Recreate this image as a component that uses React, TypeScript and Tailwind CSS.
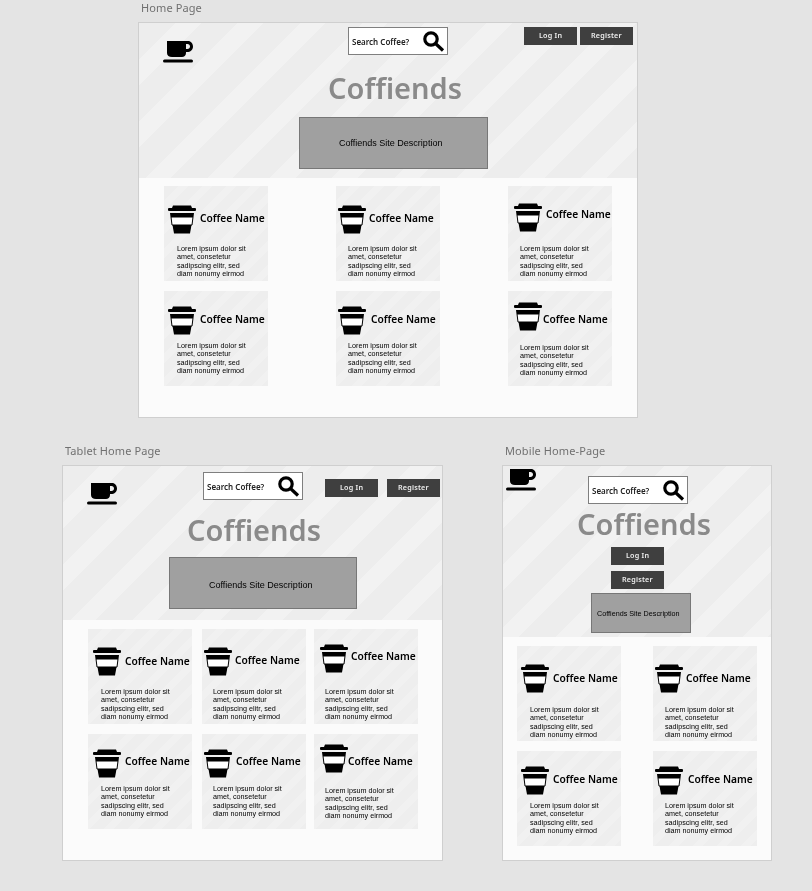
import type { ReactNode } from "react";

type CardData = {
  ix: number; // icon offset in the card
  iy: number;
  nx: number; // name offset after the icon
  ny: number;
  tx: number; // lorem text offset in the card
  ty: number;
};

const heroStripes =
  "bg-[#ededed] bg-[repeating-linear-gradient(135deg,#ededed_0px,#ededed_26px,#f2f2f2_26px,#f2f2f2_44px)]";
const cardStripes =
  "bg-[#eeeeee] bg-[repeating-linear-gradient(135deg,#eeeeee_0px,#eeeeee_10px,#f1f1f1_10px,#f1f1f1_17px)]";

function SearchBox({ className }: { className: string }) {
  return (
    <div className={`flex h-[28px] w-[100px] shrink-0 items-center justify-between border border-[#7f7f7f] bg-white pl-[3px] pr-[2px] ${className}`}>
      <span className="pt-[1px] font-['Noto_Sans',sans-serif] text-[8px] font-semibold text-[#222] will-change-transform">Search Coffee?</span>
      <svg width="22" height="21" viewBox="0 0 22 21" fill="none" stroke="black">
        <circle cx="8" cy="8" r="6.2" strokeWidth="3.2" />
        <line x1="12.5" y1="12.5" x2="20" y2="19.5" strokeWidth="3.2" />
      </svg>
    </div>
  );
}

function Btn({ label, className = "" }: { label: string; className?: string }) {
  return (
    <div className={`flex h-[18px] w-[53px] shrink-0 items-center justify-center bg-[#3f3f3f] pb-[1px] font-['Noto_Sans',sans-serif] text-[7.2px] font-semibold tracking-[0.2px] text-[#eee] ${className}`}>
      <span className="will-change-transform">{label}</span>
    </div>
  );
}

function Logo({ className }: { className: string }) {
  return (
    <svg width="30" height="22" viewBox="0 0 30 22" className={`shrink-0 ${className}`}>
      <path
        fillRule="evenodd"
        d="M4 0H25C28 0 30 2.5 30 5.5C30 9 27.5 11 24 11H23V12C23 14.5 21 16 19 16H9C6 16 4 14.5 4 12ZM23 3V8H24.5C26 8 27 7 27 5.5C27 4 26 3 24.5 3Z"
        fill="black"
      />
      <rect x="0" y="18.5" width="30" height="3" rx="1.5" fill="black" />
    </svg>
  );
}

function CupIcon() {
  return (
    <svg width="28" height="29" viewBox="0 0 28 29" className="shrink-0">
      <path d="M5 0.5H23L24 3H4Z" fill="black" />
      <rect x="0" y="3" width="28" height="3" rx="1" fill="black" />
      <path d="M2 8H26L25.5 12H2.5Z" fill="black" />
      <path d="M3 12H25L24 20H4Z" fill="white" stroke="black" strokeWidth="1" />
      <path d="M4.5 20H23.5L22 28.5H6Z" fill="black" />
    </svg>
  );
}

function Card({ c }: { c: CardData }) {
  return (
    <div className={`h-[95px] w-[104px] ${cardStripes}`}>
      <div className="flex h-[48px] items-start" style={{ paddingLeft: c.ix, paddingTop: c.iy }}>
        <CupIcon />
        <span
          className="whitespace-nowrap font-['Noto_Sans',sans-serif] text-[10.2px] font-semibold leading-[14px] text-black will-change-transform"
          style={{ marginLeft: c.nx, marginTop: c.ny }}
        >
          Coffee Name
        </span>
      </div>
      <p
        className="font-['Liberation_Sans',sans-serif] text-[7.2px] leading-[8.4px] text-black will-change-transform"
        style={{ marginLeft: c.tx, marginTop: c.ty - 47 }}
      >
        Lorem ipsum dolor sit
        <br />
        amet, consetetur
        <br />
        sadipscing elitr, sed
        <br />
        diam nonumy eirmod
      </p>
    </div>
  );
}

function Title({ className }: { className: string }) {
  return (
    <h1 className={`font-['Noto_Sans',sans-serif] text-[29px] font-semibold leading-[40px] text-[#8a8a8a] will-change-transform ${className}`}>
      Coffiends
    </h1>
  );
}

function Description({ className }: { className: string }) {
  return (
    <div className={`flex items-center justify-center border border-[#777] bg-[#a0a0a0] pr-[5px] font-['Liberation_Sans',sans-serif] text-black ${className}`}>
      <span className="will-change-transform">Coffiends Site Description</span>
    </div>
  );
}

const homeCards: CardData[] = [
  { ix: 4, iy: 19, nx: 4, ny: 6, tx: 13, ty: 58 },
  { ix: 2, iy: 19, nx: 3, ny: 6, tx: 12, ty: 58 },
  { ix: 6, iy: 17, nx: 4, ny: 4, tx: 12, ty: 58 },
  { ix: 4, iy: 15, nx: 4, ny: 6, tx: 13, ty: 50 },
  { ix: 2, iy: 15, nx: 5, ny: 6, tx: 12, ty: 50 },
  { ix: 6, iy: 11, nx: 1, ny: 10, tx: 12, ty: 52 },
];

const tabletCards: CardData[] = [
  { ix: 5, iy: 18, nx: 4, ny: 7, tx: 13, ty: 58 },
  { ix: 2, iy: 18, nx: 3, ny: 6, tx: 11, ty: 58 },
  { ix: 6, iy: 15, nx: 3, ny: 5, tx: 11, ty: 58 },
  { ix: 5, iy: 15, nx: 4, ny: 5, tx: 13, ty: 50 },
  { ix: 2, iy: 15, nx: 4, ny: 5, tx: 11, ty: 50 },
  { ix: 6, iy: 10, nx: 0, ny: 10, tx: 11, ty: 52 },
];

const mobileCards: CardData[] = [
  { ix: 4, iy: 18, nx: 4, ny: 7, tx: 13, ty: 59 },
  { ix: 2, iy: 18, nx: 3, ny: 7, tx: 12, ty: 59 },
  { ix: 4, iy: 15, nx: 4, ny: 6, tx: 13, ty: 50 },
  { ix: 2, iy: 15, nx: 5, ny: 6, tx: 12, ty: 50 },
];

// artboards sit on the design tool canvas, so only they are positioned
function Board({
  label,
  className,
  heroHeight,
  grid,
  cards,
  children,
}: {
  label: string;
  className: string;
  heroHeight: string;
  grid: string;
  cards: CardData[];
  children: ReactNode;
}) {
  return (
    <section className={`absolute ${className}`}>
      <div className="absolute -top-[22px] left-[3px] whitespace-nowrap font-['Noto_Sans',sans-serif] text-[11px] leading-[15px] tracking-[0.1px] text-[#707070] will-change-transform">
        {label}
      </div>
      <div className="h-full w-full border border-[#cfcfcf] bg-[#fbfbfb]">
        <div className={`flex flex-col items-start ${heroHeight} ${heroStripes}`}>{children}</div>
        <div className={`grid ${grid}`}>
          {cards.map((c, i) => (
            <Card key={i} c={c} />
          ))}
        </div>
      </div>
    </section>
  );
}

export default function App() {
  return (
    <div className="relative h-[891px] w-[812px] overflow-hidden bg-[#e4e4e4]">
      <Board
        label="Home Page"
        className="left-[138px] top-[22px] h-[396px] w-[500px]"
        heroHeight="h-[155px]"
        grid="grid-cols-[172px_172px_104px] gap-y-[10px] pl-[25px] pt-[8px]"
        cards={homeCards}
      >
        <div className="flex h-[45px] items-start pl-[24px] pt-[4px]">
          <Logo className="mt-[14px]" />
          <SearchBox className="ml-[155px]" />
          <div className="ml-[76px] flex gap-[3px]">
            <Btn label="Log In" />
            <Btn label="Register" />
          </div>
        </div>
        <Title className="ml-[189px]" />
        <Description className="ml-[160px] mt-[9px] h-[52px] w-[189px] pt-[2px] text-[9px]" />
      </Board>
      <Board
        label="Tablet Home Page"
        className="left-[62px] top-[465px] h-[396px] w-[381px]"
        heroHeight="h-[154px]"
        grid="grid-cols-[114px_112px_104px] gap-y-[10px] pl-[25px] pt-[9px]"
        cards={tabletCards}
      >
        <div className="flex h-[44px] items-start pl-[24px] pt-[6px]">
          <Logo className="mt-[11px]" />
          <SearchBox className="ml-[86px]" />
          <div className="ml-[22px] mt-[7px] flex gap-[9px]">
            <Btn label="Log In" />
            <Btn label="Register" />
          </div>
        </div>
        <Title className="ml-[124px]" />
        <Description className="ml-[106px] mt-[7px] h-[52px] w-[188px] pt-[6px] text-[9px]" />
      </Board>
      <Board
        label="Mobile Home-Page"
        className="left-[502px] top-[465px] h-[396px] w-[270px]"
        heroHeight="h-[171px]"
        grid="grid-cols-[136px_104px] gap-y-[10px] pl-[14px] pt-[9px]"
        cards={mobileCards}
      >
        <div className="flex h-[38px] items-start pl-[3px]">
          <Logo className="mt-[3px]" />
          <SearchBox className="ml-[52px] mt-[10px]" />
        </div>
        <Title className="ml-[74px]" />
        <Btn label="Log In" className="ml-[108px] mt-[3px]" />
        <Btn label="Register" className="ml-[108px] mt-[6px]" />
        <Description className="ml-[88px] mt-[4px] h-[40px] w-[100px] pt-[2px] text-[7.2px]" />
      </Board>
    </div>
  );
}
